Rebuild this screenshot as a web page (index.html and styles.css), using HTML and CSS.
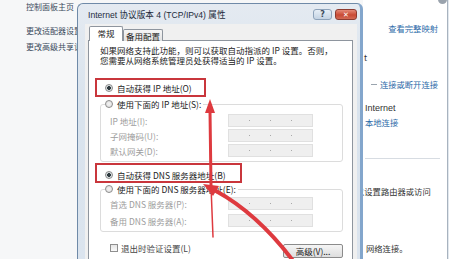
FILE: index.html
```html
<!DOCTYPE html>
<html lang="zh-CN">
  <head>
    <meta charset="UTF-8" />
    <meta name="viewport" content="width=device-width, initial-scale=1.0" />
    <title>Internet 协议版本 4 (TCP/IPv4) 属性</title>
    <link rel="stylesheet" href="styles.css">
  </head>
  <body>
    <!-- Control panel behind the dialog -->
    <div class="desk">
      <div class="nav">
        <a>控制面板主页</a>
        <a class="adapter">更改适配器设置</a>
        <a class="share">更改高级共享设置</a>
      </div>
      <div class="side">
        <span class="dot"></span>
        <a class="link map">查看完整映射</a>
        <span class="frag">t</span>
        <div class="conn"><i></i><a class="link">连接或断开连接</a></div>
        <div class="inet">Internet</div>
        <a class="link lan">本地连接</a>
        <div class="sep"></div>
        <p class="router">以设置路由器或访问</p>
        <p class="netc">网络连接。</p>
      </div>
      <div class="edge"></div>
    </div>

    <!-- Properties dialog -->
    <div class="dlg">
      <div class="titlebar">
        <span class="title">Internet 协议版本 4 (TCP/IPv4) 属性</span>
        <div class="caps">
          <span class="cap help">?</span>
          <span class="cap close">✕</span>
        </div>
      </div>
      <div class="client">
        <div class="tabs">
          <span class="tab on">常规</span>
          <span class="tab">备用配置</span>
        </div>
        <div class="panel">
          <p class="desc">如果网络支持此功能，则可以获取自动指派的 IP 设置。否则，<br>您需要从网络系统管理员处获得适当的 IP 设置。</p>

          <label class="opt auto-ip"><span class="radio on"></span>自动获得 IP 地址(O)</label>
          <div class="group">
            <label class="opt legend"><span class="radio"></span>使用下面的 IP 地址(S):</label>
            <div class="rows">
              <span class="lbl">IP 地址(I):</span>
              <span class="field"><i></i><i></i><i></i></span>
              <span class="lbl">子网掩码(U):</span>
              <span class="field"><i></i><i></i><i></i></span>
              <span class="lbl">默认网关(D):</span>
              <span class="field"><i></i><i></i><i></i></span>
            </div>
          </div>

          <label class="opt auto-dns"><span class="radio on"></span>自动获得 DNS 服务器地址(B)</label>
          <div class="group dns">
            <label class="opt legend"><span class="radio"></span>使用下面的 DNS 服务器地址(E):</label>
            <div class="rows">
              <span class="lbl">首选 DNS 服务器(P):</span>
              <span class="field"><i></i><i></i><i></i></span>
              <span class="lbl">备用 DNS 服务器(A):</span>
              <span class="field"><i></i><i></i><i></i></span>
            </div>
          </div>

          <div class="foot">
            <label class="opt chk"><span class="box"></span>退出时验证设置(L)</label>
            <button class="btn">高级(V)...</button>
          </div>
        </div>
      </div>
    </div>

    <!-- Red annotation marks -->
    <svg class="marks" width="449" height="259" viewBox="0 0 449 259">
      <rect x="96" y="79" width="109" height="17" />
      <rect x="96" y="164" width="145" height="18" />
      <path class="arrow" d="M210 111 L211 186" stroke-width="3" />
      <path class="arrow" d="M211 186 L213 237" stroke-width="1.5" />
      <polygon points="210,99 205,113 215,113" />
      <path class="arrow" d="M294 262 Q258 214 216 191" stroke-width="4" />
      <polygon points="203,184 219,186 213,196" />
    </svg>
  </body>
</html>
```

FILE: styles.css
```css
* {
  margin: 0;
  padding: 0;
  box-sizing: border-box;
}

body {
  position: relative;
  width: 449px;
  height: 259px;
  overflow: hidden;
  background: #fff;
  color: #2b2b2b;
  font-family: "Noto Sans CJK SC", sans-serif;
  font-size: 8.5px;
}

/* background window */
.desk {
  display: grid;
  grid-template-columns: 363px 84px 2px;
  height: 259px;
}

.nav {
  background: #f6f7f8;
  padding: 1px 0 0 26px;
}

.nav a {
  display: block;
  line-height: 12px;
  font-size: 8px;
  color: #3a4a5c;
  white-space: nowrap;
}

.nav .adapter {
  margin-top: 12px;
}

.nav .share {
  margin-top: 4px;
}

.side {
  display: flex;
  flex-direction: column;
  font-size: 8.3px;
  line-height: 12px;
  white-space: nowrap;
}

.link {
  color: #2d6aa8;
}

.dot {
  align-self: flex-end;
  width: 9px;
  height: 9px;
  margin: -5px 0 0 0;
  border-radius: 50%;
  background: #9aa3ad;
}

.map {
  align-self: flex-end;
  margin: 18px 9px 0 0;
}

.frag {
  margin: 17px 0 0 1px;
  color: #333;
}

.conn {
  display: flex;
  align-items: center;
  justify-content: flex-end;
  gap: 3px;
  margin: 15px 9px 0 0;
}

.conn i {
  width: 6px;
  height: 1px;
  background: #9aa4ae;
}

.inet {
  margin: 12px 0 0 2px;
  font-family: "Liberation Sans", sans-serif;
  font-size: 9px;
  color: #333;
}

.lan {
  margin: 2px 0 0 2px;
}

.sep {
  height: 1px;
  margin: 30px 7px 0 2px;
  background: #d7dce2;
}

.router {
  margin: 26px 0 0 -7px;
  color: #333;
}

.netc {
  margin: 45px 0 0 3px;
  color: #333;
}

.edge {
  border-left: 1px solid #a8b3bf;
  background: #e2e8ee;
}

/* dialog */
.dlg {
  position: absolute;
  left: 77px;
  top: 3px;
  z-index: 1;
  width: 286px;
  height: 262px;
  padding: 0 3px 0 7px;
  border: 1px solid #6f8aa8;
  border-right: 3px solid #83a6cc;
  border-radius: 6px 6px 0 0;
  background: linear-gradient(#e4eaf1, #d9e3ed 40%, #dbe4ee);
}

.titlebar {
  display: flex;
  align-items: center;
  justify-content: space-between;
  height: 20px;
  padding-left: 3px;
}

.title {
  font-family: "Liberation Sans", "Noto Sans CJK SC", sans-serif;
  font-size: 8.6px;
  color: #1d2b3b;
  white-space: nowrap;
}

.caps {
  display: flex;
  gap: 3px;
  margin-top: 1px;
}

.cap {
  display: flex;
  align-items: center;
  justify-content: center;
  height: 11px;
  border-radius: 3px;
  font-family: "DejaVu Sans", sans-serif;
  font-weight: bold;
}

.help {
  width: 19px;
  border: 1px solid #8ea3ba;
  background: linear-gradient(#e6eef6, #c4d3e3);
  color: #3b4a5a;
  font-size: 8px;
}

.close {
  width: 22px;
  border: 1px solid #8d3b30;
  background: linear-gradient(#e48a78, #c94a34 55%, #d26a55);
  color: #fff;
  font-size: 7px;
}

.client {
  height: 240px;
  padding: 2px 4px 0 3px;
  background: #f0f0f0;
}

.tabs {
  position: relative;
  z-index: 1;
  display: flex;
  align-items: flex-end;
  height: 15px;
  margin: 0 0 -1px 1px;
}

.tab {
  display: flex;
  align-items: center;
  justify-content: center;
  width: 40px;
  height: 12px;
  border: 1px solid #8e959e;
  border-bottom: none;
  border-radius: 2px 2px 0 0;
  background: linear-gradient(#f6f6f6, #e2e2e2);
  color: #222;
  font-size: 8.5px;
}

.tab.on {
  width: 34px;
  height: 15px;
  padding-bottom: 2px;
  background: #fff;
}

.panel {
  height: 230px;
  padding: 4px 9px 0 0;
  border: 1px solid #8e959e;
  background: #fff;
}

.desc {
  padding-left: 11px;
  line-height: 10px;
  color: #222;
  white-space: nowrap;
}

.opt {
  display: flex;
  align-items: center;
  gap: 4px;
  height: 14px;
  color: #222;
  white-space: nowrap;
}

.auto-ip,
.auto-dns {
  padding-left: 16px;
}

.auto-ip {
  margin-top: 16px;
}

.auto-dns {
  margin-top: 6px;
}

.radio {
  width: 8px;
  height: 8px;
  border: 1px solid #8c8c8c;
  border-radius: 50%;
  background: radial-gradient(circle, #f4f4f4, #dcdcdc);
}

.radio.on {
  background: radial-gradient(circle, #2f3a3f 0 1.6px, #dfe5e7 2.2px, #d6d6d6);
}

.group {
  margin: 9px 0 0 11px;
  padding: 0 0 4px 4px;
  border: 1px solid #dcdcdc;
  border-radius: 3px;
}

.group.dns {
  margin-top: 7px;
}

.legend {
  align-self: flex-start;
  width: fit-content;
  margin-top: -8px;
  padding-right: 2px;
  background: #fff;
}

.rows {
  display: grid;
  grid-template-columns: 118px 85px;
  grid-auto-rows: 13px;
  row-gap: 2px;
  align-items: center;
  margin: 3px 0 0 5px;
}

.dns .rows {
  row-gap: 4px;
  margin-top: 1px;
}

.lbl {
  color: #9d9d9d;
  white-space: nowrap;
}

.field {
  display: flex;
  align-items: center;
  justify-content: space-evenly;
  height: 13px;
  border: 1px solid #e0e0e0;
  background: #efefef;
}

.field i {
  width: 1px;
  height: 1px;
  background: #a9a9a9;
}

.foot {
  display: flex;
  align-items: flex-start;
  justify-content: space-between;
  margin-top: 9px;
  padding-left: 21px;
}

.chk {
  gap: 3px;
  color: #444;
}

.box {
  width: 8px;
  height: 8px;
  border: 1px solid #8f8f8f;
  background: linear-gradient(#e6e6e6, #fafafa);
}

.btn {
  width: 60px;
  height: 14px;
  margin-top: 3px;
  border: 1px solid #8b8b8b;
  border-radius: 2px;
  background: linear-gradient(#f5f5f5, #dedede);
  color: #222;
  font-family: "Noto Sans CJK SC", sans-serif;
  font-size: 8.5px;
  line-height: 12px;
}

/* annotations */
.marks {
  position: absolute;
  left: 0;
  top: 0;
  z-index: 2;
  pointer-events: none;
}

.marks rect {
  fill: none;
  stroke: #c9363c;
  stroke-width: 2;
}

.marks .arrow {
  fill: none;
  stroke: #de3a3f;
  stroke-linecap: round;
}

.marks polygon {
  fill: #de3a3f;
}
```
